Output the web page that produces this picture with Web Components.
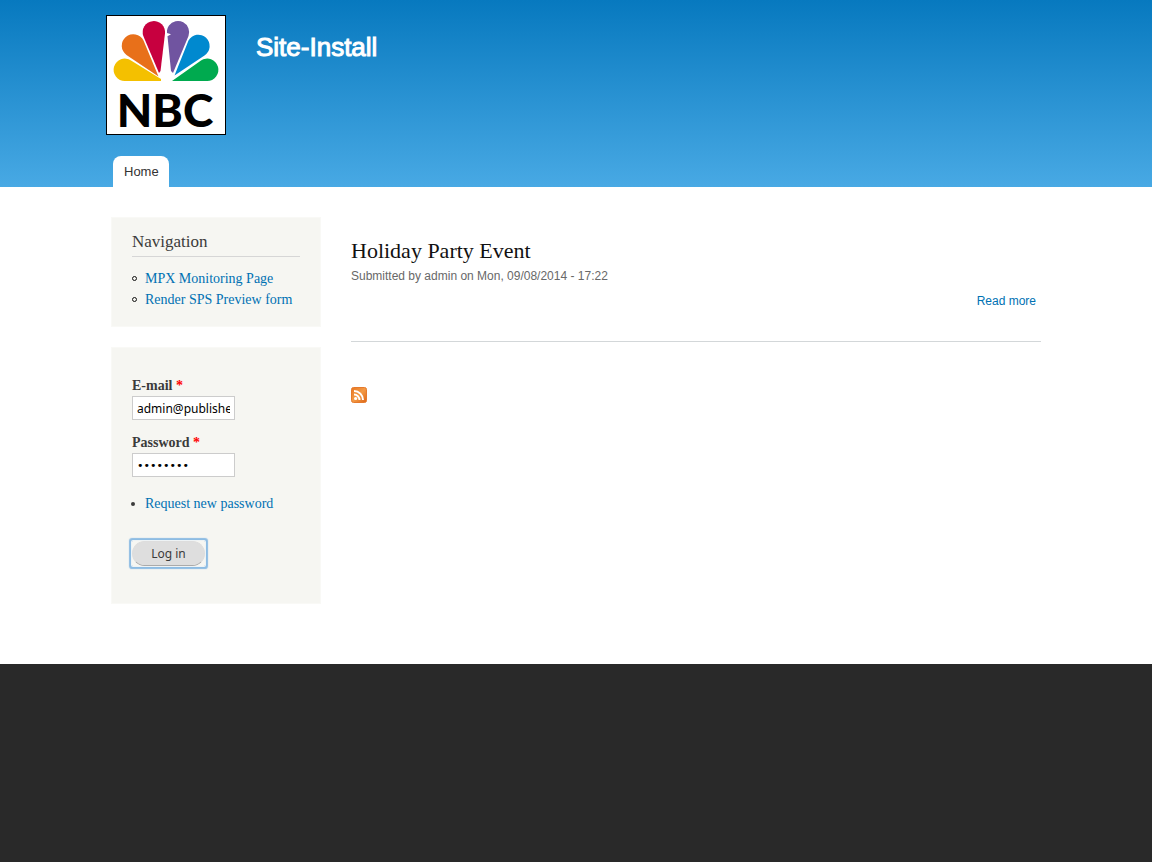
<!DOCTYPE html>
<html lang="en">
<head>
<meta charset="utf-8">
<meta name="viewport" content="width=device-width, initial-scale=1">
<title>Site-Install</title>
<style>
  html { background: #292929; }
  body { margin: 0; font: 14px/21px "Liberation Serif", serif; color: #3b3b3b; --sans: "Liberation Sans", sans-serif; --link: #0071b3; }
</style>
</head>
<body>
<site-page>
  <site-header slot="header" name="Site-Install"><nav-tab href="#home">Home</nav-tab></site-header>
  <side-block slot="sidebar" heading="Navigation"><nav-links></nav-links></side-block>
  <side-block slot="sidebar"><login-form></login-form></side-block>
  <node-teaser heading="Holiday Party Event">Submitted by admin on Mon, 09/08/2014 - 17:22</node-teaser>
  <feed-icon></feed-icon>
</site-page>

<script>
function define(name, html, setup) {
  const template = document.createElement('template');
  template.innerHTML = html;
  customElements.define(name, class extends HTMLElement {
    connectedCallback() {
      if (this.shadowRoot) return;
      const root = this.attachShadow({ mode: 'open' });
      root.append(template.content.cloneNode(true));
      if (setup) setup(this, root);
    }
  });
}

define('site-page', `
  <style>
    :host { display: block; }
    .main { background: #fff; padding: 30px 0 60px; }
    .columns { max-width: 960px; margin: 0 auto; display: grid; grid-template-columns: 1fr 3fr; }
    aside { padding: 0 15px; display: flex; flex-direction: column; gap: 20px; }
    main { padding: 20px 15px 0; min-width: 0; }
  </style>
  <slot name="header"></slot>
  <div class="main"><div class="columns">
    <aside><slot name="sidebar"></slot></aside>
    <main><slot></slot></main>
  </div></div>`);

define('site-header', `
  <style>
    :host { display: block; background: linear-gradient(#0779bf, #48a9e4); }
    .inner { max-width: 960px; margin: 0 auto; padding-top: 15px; }
    .brand { display: flex; align-items: flex-start; gap: 30px; padding: 0 10px; }
    .logo, svg { display: block; }
    svg { overflow: visible; }
    h1 { margin: 16px 0 0; font: 26px/32px var(--sans); }
    h1 a { color: #fff; text-decoration: none; -webkit-text-stroke: 1px #fff; }
    nav { display: flex; padding: 21px 17px 0; }
  </style>
  <header class="inner">
    <div class="brand">
      <a class="logo" href="#home" aria-label="NBC">
        <svg width="120" height="120" viewBox="0 0 120 120">
          <rect x=".5" y=".5" width="119" height="119" fill="#fff" stroke="#000"/>
          <path fill="#f4c000" d="M55 66H19A11.2 11.2 0 1 1 25 45.500L55 64Z"/>
          <path fill="#e8701a" d="M52.500 61.500L20.500 40A11.500 11.500 0 1 1 37.500 25.500Z"/>
          <path fill="#c7003f" d="M53 58L37.300 21A11.200 11.200 0 1 1 59 18.500L54.500 56Z"/>
          <path fill="#7054a0" d="M67 58L82.500 21A11.200 11.200 0 0 0 63 10.500C61.800 12 61.500 13.500 61 15.500V18L65 19.200L61.500 21.200L65 56Z"/>
          <path fill="#0089cf" d="M68.500 60.500L98.500 40.500A11.300 11.300 0 1 0 82.500 25.500Z"/>
          <path fill="#00aa4f" d="M66 66H101A11.200 11.200 0 1 0 95 45.500Z"/>
          <text x="59" y="112" text-anchor="middle" font-family="Lato, sans-serif" font-weight="900" font-size="46" fill="#000">NBC</text>
        </svg>
      </a>
      <h1><a href="#home"></a></h1>
    </div>
    <nav><slot></slot></nav>
  </header>`, (host, root) => { root.querySelector('h1 a').textContent = host.getAttribute('name'); });

define('nav-tab', `
  <style>
    :host { display: block; }
    a { display: block; padding: 4px 10px 3px 11px; background: #fff; border-radius: 8px 8px 0 0; color: #333; font: 13px/24px var(--sans); text-decoration: none; }
  </style>
  <a><slot></slot></a>`, (host, root) => { root.querySelector('a').href = host.getAttribute('href'); });

define('side-block', `
  <style>
    :host { display: block; background: #f6f6f2; border: 1px solid #f9f9f6; padding: 14px 20px 15px; }
    h2 { margin: 0 0 11px; padding-bottom: 4px; border-bottom: 1px solid #d6d6d6; font: 17px/20px "Liberation Serif", serif; }
  </style>
  <slot></slot>`, (host, root) => {
    const text = host.getAttribute('heading');
    if (!text) return;
    const h2 = document.createElement('h2');
    h2.textContent = text;
    root.querySelector('slot').before(h2);
  });

define('nav-links', `
  <style>
    :host { display: block; }
    ul { list-style: none; margin: 0; padding: 0 0 1px; }
    li { display: flex; align-items: center; gap: 8px; }
    li::before { content: ""; width: 3px; height: 3px; border: 1px solid #111; border-radius: 50%; }
    a { color: var(--link); text-decoration: none; }
  </style>
  <ul><li><a href="#mpx">MPX Monitoring Page</a></li><li><a href="#render">Render SPS Preview form</a></li></ul>`);

define('login-form', `
  <style>
    :host { display: block; padding: 13px 0 22px; }
    label { display: block; font-weight: bold; line-height: 21px; }
    label span { color: #f00; }
    input { display: block; box-sizing: border-box; width: 103px; height: 24px; margin: 0 0 12px; padding: 1px 4px; border: 1px solid #ccc; border-radius: 0; background: #fff; color: #000; font: 12px/20px "Noto Sans", sans-serif; }
    input[type="password"] { font-size: 11px; font-family: "DejaVu Sans", sans-serif; }
    ul { list-style: none; margin: 16px 0 27px; padding: 0; }
    li { display: flex; align-items: center; gap: 10px; }
    li::before { content: ""; width: 4px; height: 4px; border-radius: 50%; background: #3b3b3b; margin-left: -1px; }
    a { color: var(--link); text-decoration: none; }
    .ring { display: inline-block; border-radius: 1px; box-shadow: 0 0 0 1px #eef3f5, 0 0 1px 3px #8dbce3; vertical-align: top; }
    button { display: block; width: 73px; height: 25px; padding: 0; border: 1px solid #ddd; border-bottom-color: #aaa; border-radius: 13px; background: #dedede; color: #3a3a3a; font: 12px/22px "Noto Sans", sans-serif; }
  </style>
  <form>
    <label for="mail">E-mail <span>*</span></label>
    <input id="mail" type="text" value="admin@publisher.com">
    <label for="pass">Password <span>*</span></label>
    <input id="pass" type="password" value="password">
    <ul><li><a href="#password">Request new password</a></li></ul>
    <span class="ring"><button type="button">Log in</button></span>
  </form>`);

define('node-teaser', `
  <style>
    :host { display: block; padding-bottom: 30px; border-bottom: 1px solid #d3d7d9; }
    h2 { margin: 0; font: 22px/28px "Liberation Serif", serif; color: #111; }
    p { margin: 0; font: 12px/22px var(--sans); color: #686868; }
    .links { display: flex; justify-content: flex-end; padding: 4px 5px 0; font: 12px/20px var(--sans); }
    a { color: var(--link); text-decoration: none; }
  </style>
  <article>
    <h2></h2>
    <p><slot></slot></p>
    <div class="links"><a href="#node">Read more</a></div>
  </article>`, (host, root) => { root.querySelector('h2').textContent = host.getAttribute('heading'); });

define('feed-icon', `
  <style>
    :host { display: block; padding-top: 45px; }
    a { display: inline-block; vertical-align: top; }
    svg { display: block; }
  </style>
  <a href="#feed" aria-label="Subscribe">
    <svg width="16" height="16" viewBox="0 0 16 16">
      <defs><linearGradient id="g" x2="1" y2="1"><stop stop-color="#e87722"/><stop offset=".5" stop-color="#f49a45"/><stop offset="1" stop-color="#dc6415"/></linearGradient></defs>
      <rect x=".5" y=".5" width="15" height="15" rx="2" fill="url(#g)" stroke="#e57a2c"/>
      <circle cx="4.600" cy="11.500" r="1.600" fill="#fff"/>
      <path d="M3 7.500a5.500 5.500 0 0 1 5.500 5.500M3 4a9 9 0 0 1 9 9" fill="none" stroke="#fff" stroke-width="2"/>
    </svg>
  </a>`);
</script>
</body>
</html>
